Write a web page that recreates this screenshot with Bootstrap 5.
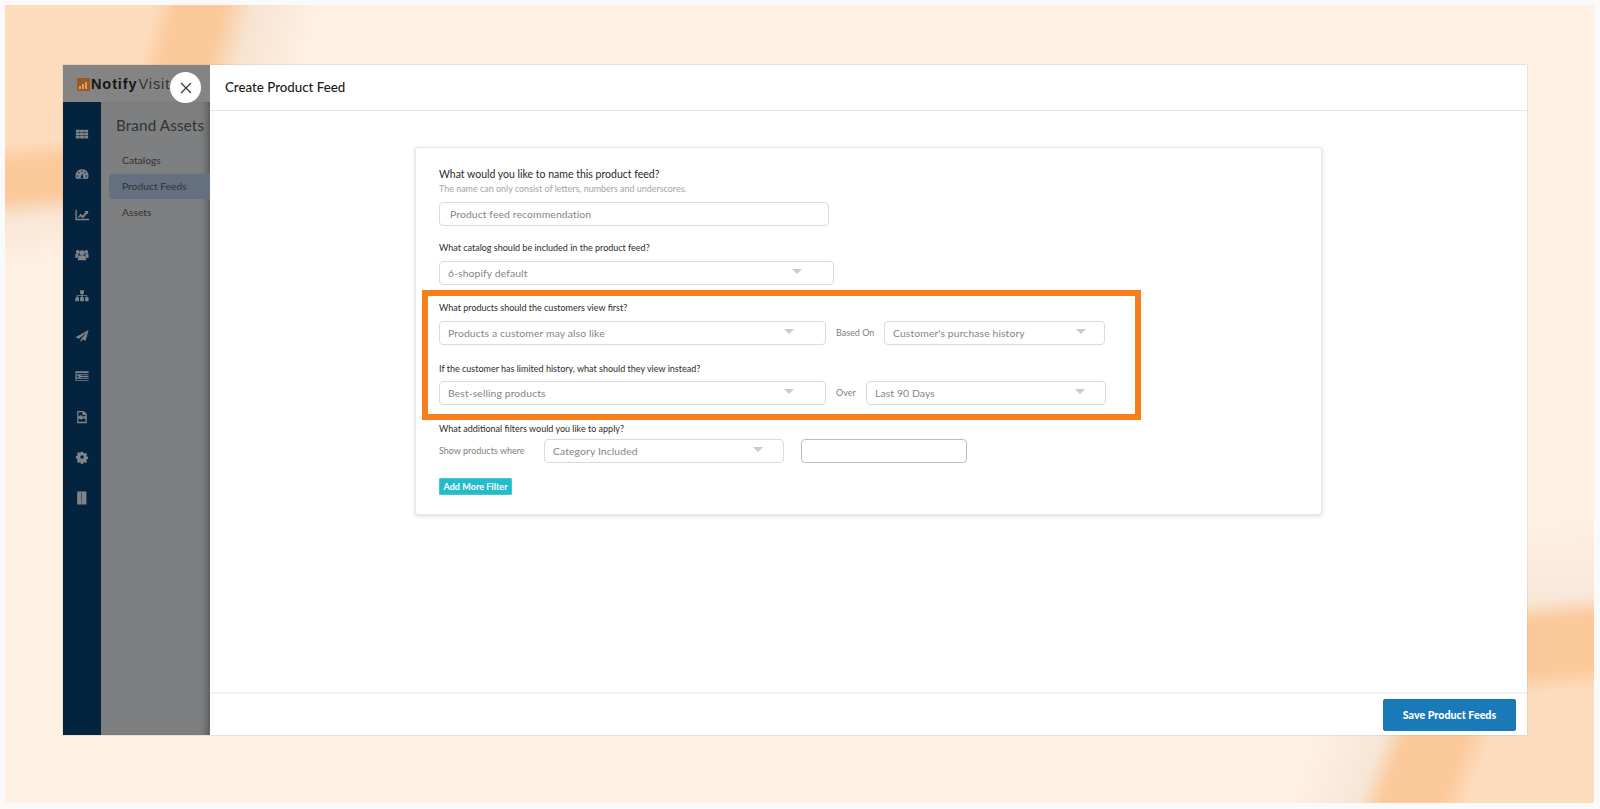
<!DOCTYPE html>
<html lang="en"><head><meta charset="utf-8"><title>Create Product Feed</title>
<link href="https://cdn.jsdelivr.net/npm/bootstrap@5.3.0/dist/css/bootstrap.min.css" rel="stylesheet">
<style>
html,body{height:100%;margin:0}
body{background:#fafafa;font-family:Lato,"Liberation Sans",sans-serif;overflow:hidden}
.stage{position:relative;margin:5px 6px 6px 5px;height:798px;padding:60px 67px 68px 58px;background-color:#fef0e3;
background-image:
linear-gradient(111deg,transparent 1222px,#f7e6d6 1286px,#fbc99a 1310px,#fbc99a 1364px,#fddcbd 1389px),
linear-gradient(175deg,transparent 515px,#f8e8d9 593px,#fbc99a 615px,#fbc99a 665px,#fddcbd 687px),
linear-gradient(105deg,#fddcbd 0,#fddcbd 145px,#fbc99a 167px,#fbc99a 211px,#f8e3d0 240px,#fef0e3 305px);
background-size:100% 68px,67px 798px,330px 60px;
background-position:0 100%,100% 0,0 0;
background-repeat:no-repeat}
.stage::before{content:"";position:absolute;left:0;top:60px;width:58px;height:200px;background:linear-gradient(175deg,#fddcbd 0,#fddcbd 78px,#fbc99a 100px,#fbc99a 132px,#f9e6d6 155px,#fef0e3 200px)}
.appwin{position:relative;display:flex;height:670px;background:#fff;box-shadow:0 0 1px #9a9a9a}
.leftpane{width:147px;flex:none;display:flex;flex-direction:column;background:#7e7f80}
.brandbar{height:37px;padding:2px 0 0 14px;display:flex;align-items:center;gap:1px;font-family:"Liberation Sans",Arial,sans-serif;font-size:14.5px;line-height:1;letter-spacing:.9px;color:#161616;white-space:nowrap;overflow:hidden;background:#848484}
.brandbar b{font-weight:700}.brandbar span{color:#333}
.panebody{flex:1;display:flex}
.railnav{width:38px;flex:none;background:#03233f;padding-top:25px;display:flex;flex-direction:column;align-items:center;gap:26.4px}
.railnav svg{width:14px;height:14px;fill:#7f848a;display:block}
.subnav{flex:1;box-shadow:inset -8px 0 7px -5px rgba(40,40,40,.45);padding-left:8px;overflow:hidden;color:#333}
.subnav h2{font-size:15.2px;font-weight:400;margin:13px 0 13px 7px;line-height:20px;white-space:nowrap;letter-spacing:.15px}
.subitem{height:25px;line-height:25px;padding-left:13px;font-size:10.3px;margin-bottom:1px;border-radius:4px 0 0 4px}
.subitem.cur{background:#64707f}
.closer{position:absolute;left:107px;top:7px;width:31px;height:31px;border-radius:50%;background:#fff;display:flex;align-items:center;justify-content:center}
.mainpane{flex:1;display:flex;flex-direction:column;min-width:0}
.mainhead{height:46px;flex:none;border-bottom:1px solid #e4e5e6;padding:0 15px;display:flex;align-items:center;font-size:13.3px;font-weight:500;color:#1a1a1a}
.mainbody{flex:1;padding:36px 0 0 205px;background:#fff}
.mainfoot{height:43px;flex:none;border-top:2px solid #f2f2f2;display:flex;justify-content:flex-end;align-items:flex-start;padding:5px 11px 0 0}
.savebtn{width:133px;height:32px;padding:0;background:#1a7ab8;border:1px solid #1a7ab8;border-radius:2px;color:#fff;font-size:10.7px;font-weight:900}
.feedcard{width:907px;height:368px;background:#fff;border:1px solid #e5e7e9;border-radius:3px;box-shadow:0 1px 4px rgba(0,0,0,.16);padding:18px 0 0 23px}
.qmain{font-size:10.5px;line-height:16px;color:#2a2a2a}
.qsub{font-size:8.95px;line-height:12px;color:#a4a4a4;margin-top:1px}
.qlabel{font-size:9px;line-height:16px;color:#2c2c2c}
.sidetxt{font-size:9px;color:#808080;line-height:16px;white-space:nowrap}
.fld{height:24px;border:1px solid #d5dbe3;border-radius:4px;background:#fff;color:#858585;font-size:10.4px;display:flex;align-items:center;justify-content:space-between;padding:2px 20px 0 8px;letter-spacing:.1px}
.fld::after{content:"";width:0;height:0;border-left:5px solid transparent;border-right:5px solid transparent;border-top:5px solid #c3cbd5;margin-bottom:5px}
.fld.bare::after{display:none}
.w390{width:390px;padding-left:10px}.w395{width:395px;padding-right:31px}.w387{width:387px;padding-right:31px}.w221{width:221px;padding-right:18px}.w240{width:240px}.w166{width:166px;border-color:#bdbdbd}
.callout{width:719px;margin:5px 0 0 -17px;height:130px;border:6px solid #f67e1b;padding:4px 0 0 11px}
.addbtn{display:block;width:73px;height:17px;padding:0;margin-top:15px;background:#25bcca;border:1px solid #45c8d4;border-radius:1px;color:#fff;font-size:9.1px;font-weight:700;line-height:14px}
</style></head>
<body>
<div class="stage">
<div class="appwin">
 <aside class="leftpane">
  <div class="brandbar">
   <svg width="13" height="13" viewBox="0 0 13 13"><rect width="13" height="13" fill="#9c5a22"/><path fill="#d9a06c" d="M2 11h2V8H2zM5 11h2V6H5zM8 11h2V4H8z"/></svg>
   <b>Notify</b><span>Visitors</span>
  </div>
  <div class="panebody">
   <nav class="railnav">
    <svg viewBox="0 0 16 16"><path d="M1 3h4.400v3H1zM5.800 3h4.400v3H5.800zM10.600 3H15v3h-4.400zM1 6.500h4.400v3H1zM5.800 6.500h4.400v3H5.800zM10.600 6.500H15v3h-4.400zM1 10h4.400v3H1zM5.800 10h4.400v3H5.800zM10.600 10H15v3h-4.400z"/></svg>
    <svg viewBox="0 0 16 16"><path fill-rule="evenodd" d="M8 2.500a7.500 7.500 0 0 0-7.500 7.500c0 1.300.3 2.500.9 3.500h13.200c.6-1 .9-2.200.9-3.500A7.500 7.500 0 0 0 8 2.500zM8 4.200a.9.900 0 1 1 0 1.800.9.900 0 0 1 0-1.800zM4.500 5.700a.9.900 0 1 1 0 1.800.9.900 0 0 1 0-1.800zM11.500 5.700a.9.900 0 1 1 0 1.800.9.900 0 0 1 0-1.800zM3 9.500a.9.900 0 1 1 0 1.800.9.900 0 0 1 0-1.800zM13 9.500a.9.900 0 1 1 0 1.800.9.900 0 0 1 0-1.800zM8.500 7l.6 3.500a1.500 1.500 0 1 1-2.200 0z"/></svg>
    <svg viewBox="0 0 16 16"><path d="M.5 2h1.600v10.400H16V14H.5z"/><path d="M3 11l3.300-4.300 2.700 2 3-4-1.500-1.200H15v4l-1.200-1.300-4.500 5.500-2.700-2L4 11z"/></svg>
    <svg viewBox="0 0 16 16"><circle cx="8" cy="5.500" r="3"/><circle cx="3.200" cy="4.500" r="2.200"/><circle cx="12.800" cy="4.500" r="2.200"/><path d="M4 8.500h8l1 5.500H3zM.5 6.500h3.200l.2 1.500-1 3.500H.5zM12.300 6.500h3.200v5h-2.400l-1-3.500z"/></svg>
    <svg viewBox="0 0 16 16"><path d="M5.800 1.500h4.400v4H8.700v1.500h5.300v2.500h1.500V14h-4V9.500H13V8H8.700v1.500h1.500V14H5.800V9.500h1.500V8H3v1.500h1.500V14h-4V9.500H2V7h5.300V5.500H5.800z"/></svg>
    <svg viewBox="0 0 16 16"><path d="M15.500 1L.5 9.500l3.900 1.600L13 4l-6.500 8v3l2.400-2.900 3.300 1.400z"/></svg>
    <svg viewBox="0 0 16 16"><path fill-rule="evenodd" d="M.5 2.500h15v11H.5zM1.700 4.500V6h13.800V4.500zM6.500 7v1h9V7zM6.500 9v1h9V9zM1.700 11v1.500h13.800V11zM2 6.800v3.400l2.800-1.700z"/></svg>
    <svg viewBox="0 0 16 16"><path fill-rule="evenodd" d="M2.500 1h7.500l3.500 3.500V15h-11zM4 2.700v5l2.500-2 2.500 2 3-1v-1H8.500V2.700zM4 13.500h8v-3.300l-2.500-.7-2.500 1.500-3-1.500z"/></svg>
    <svg viewBox="0 0 16 16"><path fill-rule="evenodd" d="M6.800 2h2.400l.3 1.500 1.300.6 1.300-.9 1.700 1.700-.9 1.300.6 1.300 1.500.3v2.400l-1.500.3-.6 1.300.9 1.300-1.700 1.700-1.300-.9-1.300.6-.3 1.500H6.800l-.3-1.500-1.300-.6-1.300.9-1.700-1.700.9-1.300-.6-1.300L1 9.200V6.800l1.500-.3.6-1.300-.9-1.300 1.700-1.700 1.300.9 1.300-.6zM8 6a2 2 0 1 0 0 4 2 2 0 0 0 0-4z"/></svg>
    <svg viewBox="0 0 16 16"><path fill-rule="evenodd" d="M2.500 .500h10.500v15H2.500zM7.400 2v10h.6V2zM7.200 13.300v1h1v-1z"/></svg>
   </nav>
   <div class="subnav">
    <h2>Brand Assets</h2>
    <div class="subitem">Catalogs</div>
    <div class="subitem cur">Product Feeds</div>
    <div class="subitem">Assets</div>
   </div>
  </div>
 </aside>
 <button class="closer border-0 p-0" aria-label="Close"><svg width="12" height="12" viewBox="0 0 12 12"><path d="M1 1l10 10M11 1L1 11" stroke="#333" stroke-width="1.100" fill="none"/></svg></button>
 <main class="mainpane">
  <div class="mainhead">Create Product Feed</div>
  <div class="mainbody">
   <div class="feedcard">
    <div class="qmain">What would you like to name this product feed?</div>
    <div class="qsub">The name can only consist of letters, numbers and underscores.</div>
    <div class="fld bare w390" style="margin-top:7px">Product feed recommendation</div>
    <div class="qlabel" style="margin-top:14px">What catalog should be included in the product feed?</div>
    <div class="fld w395" style="margin-top:5px">6-shopify default</div>
    <div class="callout">
     <div class="qlabel">What products should the customers view first?</div>
     <div class="d-flex align-items-center" style="margin-top:5px">
      <div class="fld w387">Products a customer may also like</div>
      <div class="sidetxt" style="margin-left:10px;width:48px">Based On</div>
      <div class="fld w221">Customer's purchase history</div>
     </div>
     <div class="qlabel" style="margin-top:16px">If the customer has limited history, what should they view instead?</div>
     <div class="d-flex align-items-center" style="margin-top:4px">
      <div class="fld w387">Best-selling products</div>
      <div class="sidetxt" style="margin-left:10px;width:30px">Over</div>
      <div class="fld w240">Last 90 Days</div>
     </div>
    </div>
    <div class="qlabel" style="margin-top:1px">What additional filters would you like to apply?</div>
    <div class="d-flex align-items-center" style="margin-top:2px">
     <div class="sidetxt" style="width:105px">Show products where</div>
     <div class="fld w240">Category Included</div>
     <div class="fld bare w166" style="margin-left:17px"></div>
    </div>
    <button class="addbtn">Add More Filter</button>
   </div>
  </div>
  <div class="mainfoot"><button class="savebtn">Save Product Feeds</button></div>
 </main>
</div>
</div>
<script src="https://cdn.jsdelivr.net/npm/bootstrap@5.3.0/dist/js/bootstrap.bundle.min.js"></script>
</body></html>
